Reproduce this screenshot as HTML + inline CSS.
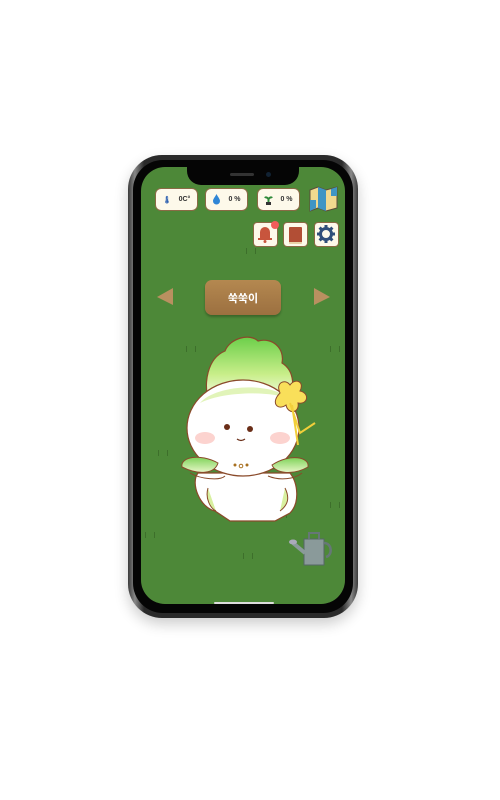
<!DOCTYPE html>
<html><head><meta charset="utf-8"><style>
body{margin:0;width:500px;height:800px;background:#fff;position:relative;overflow:hidden;font-family:"Liberation Sans","Noto Sans CJK KR",sans-serif}
.phone{position:absolute;left:128px;top:155px;width:230px;height:463px;border-radius:34px;background:linear-gradient(90deg,#3a3a3a,#888 3%,#2a2a2a 7%,#2a2a2a 93%,#888 97%,#3a3a3a);box-shadow:0 6px 14px rgba(0,0,0,.2)}
.bezel{position:absolute;left:5px;top:5px;right:5px;bottom:5px;border-radius:30px;background:#050505}
.screen{position:absolute;left:141px;top:167px;width:204px;height:437px;border-radius:24px;background:#4d8838;overflow:hidden}
.notch{position:absolute;left:187px;top:167px;width:112px;height:18px;background:#050505;border-radius:0 0 14px 14px}
.pill{position:absolute;top:188px;height:23px;background:#fdf9ea;border:1.5px solid #8a6a45;border-radius:6px;box-sizing:border-box;font-size:7px;font-weight:bold;color:#333;display:flex;align-items:center;justify-content:center;gap:7px}
.btn{position:absolute;top:222px;width:25px;height:25px;background:#fdf9ea;border:1.5px solid #8a6a45;border-radius:4px;box-sizing:border-box}
.sign{position:absolute;left:205px;top:280px;width:76px;height:35px;border-radius:7px;background:linear-gradient(#b48850,#9c7040);color:#fff;font-size:11px;font-weight:bold;display:flex;align-items:center;justify-content:center;box-shadow:0 2px 2px rgba(0,0,0,.25)}
.home{position:absolute;left:214px;top:602px;width:60px;height:2px;background:#ddd;border-radius:2px}
.gr{position:absolute;width:8px;height:6px;border-left:1px solid #3d6f2b;border-right:1px solid #3d6f2b;}
</style></head><body>
<div class="phone"><div class="bezel"></div></div>
<div class="screen"></div>
<div class="gr" style="left:186px;top:346px"></div>
<div class="gr" style="left:330px;top:346px"></div>
<div class="gr" style="left:158px;top:450px"></div>
<div class="gr" style="left:330px;top:502px"></div>
<div class="gr" style="left:243px;top:553px"></div>
<div class="gr" style="left:145px;top:532px"></div>
<div class="gr" style="left:298px;top:330px;display:none"></div>
<div class="gr" style="left:277px;top:512px"></div>
<div class="gr" style="left:246px;top:248px"></div>
<div class="notch"></div>
<div style="position:absolute;left:230px;top:173px;width:24px;height:3px;border-radius:2px;background:#333"></div>
<div style="position:absolute;left:266px;top:172px;width:5px;height:5px;border-radius:50%;background:#123"></div>
<div class="pill" style="left:155px;width:43px"><span style="color:#2b5fb0">🌡︎</span>0C°</div>
<div class="pill" style="left:205px;width:43px"><svg width="9" height="11"><path d="M4.5 0C3 3 1 5 1 7a3.5 3.5 0 0 0 7 0C8 5 6 3 4.5 0z" fill="#2f86d6"/></svg>0 %</div>
<div class="pill" style="left:257px;width:43px"><svg width="9" height="11"><path d="M4.5 4V10M4.5 5C2 2 1 4 1 4M4.5 5C7 2 8 4 8 4" stroke="#2f8a3a" stroke-width="2" fill="none"/><rect x="2" y="8" width="5" height="3" fill="#333"/></svg>0 %</div>
<svg style="position:absolute;left:309px;top:186px" width="30" height="26"><path d="M1 4L9 1 17 4 28 1V22L17 25 9 22 1 25z" fill="#f1d98f" stroke="#5a4a3a"/><path d="M9 1L17 4V25L9 22z" fill="#3f95c4"/><path d="M22 3L28 1V10H22z" fill="#3f95c4"/><path d="M1 14H7V22L1 25z" fill="#3f95c4"/></svg>
<div class="btn" style="left:253px"><svg width="22" height="22"><path d="M6 15V9a5 5 0 0 1 10 0v6h2v2H4v-2z" fill="#c8553d"/><circle cx="11" cy="18.5" r="1.5" fill="#c8553d"/></svg></div>
<div style="position:absolute;left:271px;top:221px;width:8px;height:8px;border-radius:50%;background:#f25b5b"></div>
<div class="btn" style="left:283px"><div style="position:absolute;left:5px;top:4px;width:13px;height:15px;background:#b24e35;border-radius:1px;border-bottom:2px solid #e8d3a8"></div></div>
<div class="btn" style="left:314px"><svg width="22" height="22"><circle cx="11" cy="11" r="5.5" fill="none" stroke="#2f4e7a" stroke-width="3"/><g stroke="#2f4e7a" stroke-width="3"><path d="M11 2v4M11 16v4M2 11h4M16 11h4M4.6 4.6l2.8 2.8M14.6 14.6l2.8 2.8M4.6 17.4l2.8-2.8M14.6 7.4l2.8-2.8"/></g></svg></div>
<svg style="position:absolute;left:156px;top:287px" width="18" height="19"><path d="M17 1V18L1 10z" fill="#b99060"/></svg>
<svg style="position:absolute;left:313px;top:287px" width="18" height="19"><path d="M1 1V18L17 10z" fill="#b99060"/></svg>
<div class="sign">쑥쑥이</div>
<svg style="position:absolute;left:180px;top:333px" width="140" height="195">
<defs><linearGradient id="g" x1="0" y1="0" x2="0" y2="1"><stop offset="0" stop-color="#6ccf4a"/><stop offset="0.55" stop-color="#c9ee8a"/><stop offset="1" stop-color="#fff"/></linearGradient>
<linearGradient id="a" x1="0" y1="0" x2="0" y2="1"><stop offset="0" stop-color="#7fd35a"/><stop offset="1" stop-color="#e8f7c8"/></linearGradient></defs>
<path d="M30 72C22 50 28 25 45 18C50 5 70 0 78 8C92 4 105 15 102 30C115 38 115 55 108 72Z" fill="url(#g)" stroke="#8a4a2a" stroke-width="1.2"/>
<path d="M18 140C10 150 20 175 35 178L50 188H95L110 180C120 170 118 150 110 140Z" fill="#fff" stroke="#8a4a2a" stroke-width="1.2"/>
<path d="M28 155C25 165 30 175 36 178M105 155C110 165 108 172 100 178" stroke="#8a4a2a" fill="#d8f0a0"/>
<ellipse cx="63" cy="95" rx="56" ry="48" fill="#fff" stroke="#8a4a2a" stroke-width="1.2"/>
<path d="M20 70C35 52 90 48 110 66C90 58 45 58 20 70Z" fill="#d9f1a8" opacity=".8"/>
<ellipse cx="25" cy="105" rx="10" ry="6" fill="#fcd3cf"/><ellipse cx="100" cy="105" rx="10" ry="6" fill="#fcd3cf"/>
<circle cx="47" cy="94" r="3" fill="#6a2e18"/><circle cx="70" cy="96" r="3" fill="#6a2e18"/>
<path d="M57 106q4 3 8 0" stroke="#6a2e18" fill="none" stroke-width="1.2"/>
<circle cx="55" cy="132" r="1.5" fill="#a87020"/><circle cx="61" cy="133" r="1.8" fill="none" stroke="#a87020"/><circle cx="67" cy="132" r="1.5" fill="#a87020"/>
<path d="M2 134C0 124 20 120 38 130C35 140 20 143 2 134Z" fill="url(#a)" stroke="#8a4a2a"/>
<path d="M92 132C110 120 130 124 128 134C112 143 95 140 92 132Z" fill="url(#a)" stroke="#8a4a2a"/>
<path d="M10 140C20 146 40 148 45 143M88 143C100 148 115 146 122 140" stroke="#8a4a2a" fill="none"/>
<path d="M100 60C95 50 105 45 110 52C115 45 125 48 120 58C130 60 128 72 118 70C120 80 108 82 106 72C98 78 90 70 100 60Z" fill="#f9df5a" stroke="#8a4a2a"/>
<path d="M110 70L120 100L135 90M112 72L118 112" stroke="#f2cf3a" stroke-width="2" fill="none"/>
</svg>
<svg style="position:absolute;left:289px;top:529px" width="48" height="40"><path d="M15 10h20v26H15z" fill="#8a9a9a" stroke="#566"/><path d="M20 10V4h10v6" stroke="#677" fill="none" stroke-width="2"/><path d="M35 14c8 0 9 12 2 14" stroke="#677" fill="none" stroke-width="2.5"/><path d="M16 24L4 14" stroke="#8a9a9a" stroke-width="4"/><ellipse cx="4" cy="13" rx="4" ry="2.5" fill="#aab"/></svg>
<div class="home"></div>
</body></html>
